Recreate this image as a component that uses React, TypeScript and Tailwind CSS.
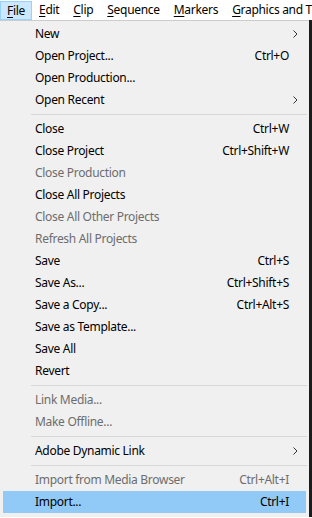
import React from 'react';

type Item =
  | { kind: 'sep' }
  | { kind: 'item'; label: string; shortcut?: string; sub?: boolean; disabled?: boolean; active?: boolean };

const items: Item[] = [
  { kind: 'item', label: 'New', sub: true },
  { kind: 'item', label: 'Open Project...', shortcut: 'Ctrl+O' },
  { kind: 'item', label: 'Open Production...' },
  { kind: 'item', label: 'Open Recent', sub: true },
  { kind: 'sep' },
  { kind: 'item', label: 'Close', shortcut: 'Ctrl+W' },
  { kind: 'item', label: 'Close Project', shortcut: 'Ctrl+Shift+W' },
  { kind: 'item', label: 'Close Production', disabled: true },
  { kind: 'item', label: 'Close All Projects' },
  { kind: 'item', label: 'Close All Other Projects', disabled: true },
  { kind: 'item', label: 'Refresh All Projects', disabled: true },
  { kind: 'item', label: 'Save', shortcut: 'Ctrl+S' },
  { kind: 'item', label: 'Save As...', shortcut: 'Ctrl+Shift+S' },
  { kind: 'item', label: 'Save a Copy...', shortcut: 'Ctrl+Alt+S' },
  { kind: 'item', label: 'Save as Template...' },
  { kind: 'item', label: 'Save All' },
  { kind: 'item', label: 'Revert' },
  { kind: 'sep' },
  { kind: 'item', label: 'Link Media...', disabled: true },
  { kind: 'item', label: 'Make Offline...', disabled: true },
  { kind: 'sep' },
  { kind: 'item', label: 'Adobe Dynamic Link', sub: true },
  { kind: 'sep' },
  { kind: 'item', label: 'Import from Media Browser', shortcut: 'Ctrl+Alt+I', disabled: true },
  { kind: 'item', label: 'Import...', shortcut: 'Ctrl+I', active: true },
];

// last one is clipped by the window edge, same as the screenshot
const menus = ['File', 'Edit', 'Clip', 'Sequence', 'Markers', 'Graphics and Titles'];

function Chevron() {
  return (
    <svg width="5" height="8" viewBox="0 0 5 8" className="text-[#333]">
      <polyline points="0.5,0.5 4,4 0.5,7.5" fill="none" stroke="currentColor" strokeWidth="1" />
    </svg>
  );
}

export default function App() {
  return (
    <div
      className="w-[312px] h-[518px] bg-white overflow-hidden text-[12px] tracking-[-0.3px] text-black"
      style={{ fontFamily: '"Noto Sans", "Open Sans", sans-serif' }}
    >
      {/* menu bar */}
      <div className="h-[20px] flex items-stretch whitespace-nowrap">
        {menus.map((m, i) => (
          <div
            key={m}
            className={
              i === 0
                ? 'flex items-center px-[6px] mt-px bg-[#cce8ff] border border-[#99d1ff]'
                : 'flex items-center px-[7px]'
            }
          >
            <span className="underline underline-offset-2">{m[0]}</span>
            <span>{m.slice(1)}</span>
          </div>
        ))}
      </div>

      {/* dropdown */}
      <div className="flex">
        <div className="w-[309px] bg-[#f0f0f0] border-t border-[#cccccc] pt-[2px] pb-[4px]">
          {items.map((it, i) =>
            it.kind === 'sep' ? (
              <div key={i} className="h-[7px] flex items-center pl-[31px] pr-[2px]">
                <div className="h-px w-full bg-[#d7d7d7]" />
              </div>
            ) : (
              <div
                key={i}
                className={
                  'h-[22px] mx-[3px] flex items-center pl-[32px] pr-[17px] ' +
                  (it.active ? 'bg-[#91c9f7]' : '') +
                  (it.disabled ? ' text-[#6d6d6d]' : ' text-black')
                }
              >
                <span className="flex-1">{it.label}</span>
                {it.shortcut && <span>{it.shortcut}</span>}
                {it.sub && (
                  <span className="-mr-[9px]">
                    <Chevron />
                  </span>
                )}
              </div>
            )
          )}
        </div>
        <div className="w-[3px] bg-[#1c1c1c]" />
      </div>
    </div>
  );
}
